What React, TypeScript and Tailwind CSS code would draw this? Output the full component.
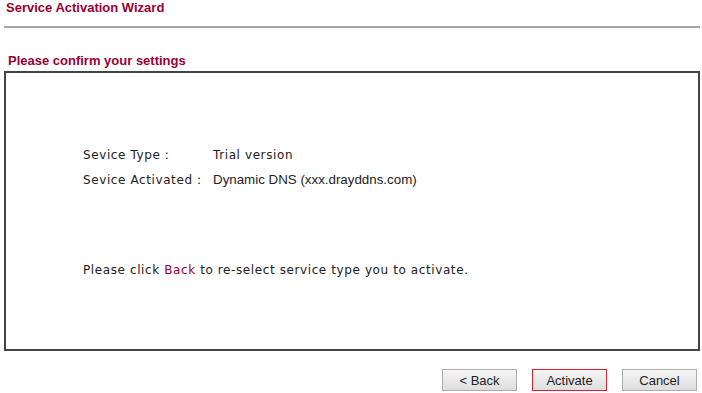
import React from 'react';

const rows = [
  { label: 'Sevice Type :', value: 'Trial version', font: 'verdana' },
  { label: 'Sevice Activated :', value: 'Dynamic DNS (xxx.drayddns.com)', font: 'arial' },
];

const buttons = ['< Back', 'Activate', 'Cancel'];

export default function App() {
  return (
    <div className="w-[702px] h-[393px] bg-white text-[#222] font-['Liberation_Sans',Arial,sans-serif]">
      <div className="pl-[6px] h-[16px] leading-[16px] text-[13px] font-bold text-[#990033]">Service Activation Wizard</div>
      <div className="mt-[10px] ml-[4px] mr-[2px] border-t-2 border-[#a6a6a6]" />
      <div className="mt-[25px] pl-[8px] h-[16px] leading-[16px] text-[13px] font-bold text-[#990033]">Please confirm your settings</div>
      <div className="mt-[2px] ml-[4px] w-[696px] h-[280px] border-2 border-[#444] pt-[69px] pl-[77px] font-['DejaVu_Sans',Verdana,sans-serif] text-[12px] tracking-[0.6px]">
        {rows.map((r) => (
          <div key={r.label} className="flex h-[25px] items-center">
            <span className="w-[130px]">{r.label}</span>
            <span className={r.font === 'arial' ? "font-['Liberation_Sans',Arial,sans-serif] text-[13.33px] tracking-normal" : ''}>{r.value}</span>
          </div>
        ))}
        <div className="mt-[65px] h-[25px] flex items-center">
          <span>
            Please click <span className="text-[#990033]">Back</span> to re-select service type you to activate.
          </span>
        </div>
      </div>
      <div className="mt-[18px] mr-[5px] flex justify-end gap-[15px]">
        {buttons.map((b) => (
          <button
            key={b}
            className={
              'w-[75px] h-[22px] text-[13px] leading-none text-[#222] bg-gradient-to-b from-[#f6f6f6] to-[#dedede] border ' +
              (b === 'Activate' ? 'border-[#e0202a]' : 'border-[#adadad]')
            }
          >
            {b}
          </button>
        ))}
      </div>
    </div>
  );
}
